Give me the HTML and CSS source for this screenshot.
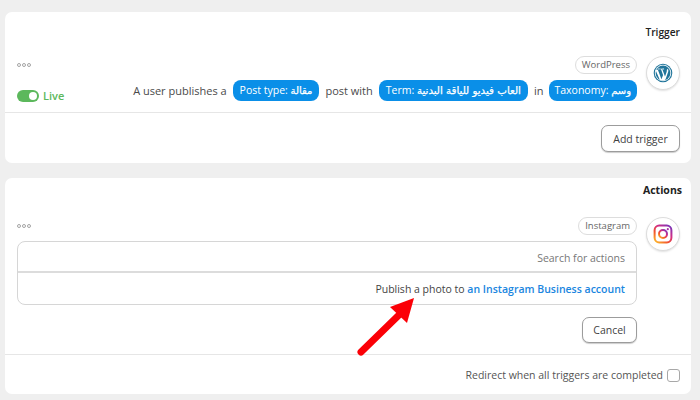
FILE: index.html
```html
<!DOCTYPE html>
<html lang="en">
<head>
<meta charset="utf-8">
<title>Automation</title>
<link rel="stylesheet" href="styles.css">
</head>
<body>
<main class="page">
  <section class="card card-trigger">
    <h2 class="card-title">Trigger</h2>
    <div class="step">
      <div class="step-main">
        <div class="step-top">
          <span class="dots"><i></i><i></i><i></i></span>
          <span class="pill">WordPress</span>
        </div>
        <div class="sentence-row">
          <span class="live"><span class="toggle"></span>Live</span>
          <div class="sentence">
            <span>A user publishes a</span>
            <span class="tag">Post type: <b>مقالة</b></span>
            <span>post with</span>
            <span class="tag">Term: <b class="wide">العاب فيديو للياقة البدنية</b></span>
            <span>in</span>
            <span class="tag tag-tight">Taxonomy: <b>وسم</b></span>
          </div>
        </div>
      </div>
      <div class="icon-circle">
        <svg width="20" height="20" viewBox="0 0 20 20" aria-hidden="true">
          <circle cx="10" cy="10" r="9.3" fill="#21759b"/>
          <circle cx="10" cy="10" r="8.2" fill="#fff"/>
          <circle cx="10" cy="10" r="7.4" fill="#21759b"/>
          <path d="M2.6 7.2 7 17.2l1.6-.4L4.8 6.4l1.6-.1h3l1.7.1-.1-.9-3 .2-2.9-.2-.2.9zM8 6.3l3.6 10.2.8.2 2.8-8c.5-1.4-.2-2.6-.6-3l-.8 1.3c0 .7.1 1.2-.2 2l-1.6 4.6-2.6-7.1zM10 17.4l2.1.1-2-5.6-2 5.4z" fill="#fff"/>
        </svg>
      </div>
    </div>
    <div class="card-footer">
      <button class="btn btn-add" type="button">Add trigger</button>
    </div>
  </section>

  <section class="card card-actions">
    <h2 class="card-title title-bold">Actions</h2>
    <div class="step step-actions">
      <div class="step-main">
        <div class="step-top top-actions">
          <span class="dots"><i></i><i></i><i></i></span>
          <span class="pill">Instagram</span>
        </div>
        <div class="picker">
          <div class="picker-search">Search for actions</div>
          <div class="picker-item">Publish a photo to <a href="#">an Instagram Business account</a></div>
        </div>
        <div class="cancel-row">
          <button class="btn btn-cancel" type="button">Cancel</button>
        </div>
      </div>
      <div class="icon-circle">
        <svg width="20" height="20" viewBox="0 0 20 20" aria-hidden="true">
          <defs>
            <linearGradient id="ig" x1="0.1" y1="1" x2="0.9" y2="0">
              <stop offset="0" stop-color="#fdb32b"/>
              <stop offset="0.35" stop-color="#f0502f"/>
              <stop offset="0.65" stop-color="#d12d86"/>
              <stop offset="1" stop-color="#7a35b8"/>
            </linearGradient>
          </defs>
          <rect x="1.6" y="1.6" width="16.8" height="16.8" rx="4.6" fill="none" stroke="url(#ig)" stroke-width="2"/>
          <circle cx="10" cy="10" r="4" fill="none" stroke="url(#ig)" stroke-width="2"/>
          <circle cx="14.8" cy="5.2" r="1.1" fill="#a832a6"/>
        </svg>
      </div>
    </div>
    <div class="card-footer footer-redirect">
      <label class="redirect">Redirect when all triggers are completed<span class="checkbox"></span></label>
    </div>
    <svg class="arrow" width="64" height="64" viewBox="0 0 64 64" aria-hidden="true">
      <path d="M7 54 46 16" stroke="#fb0007" stroke-width="7" stroke-linecap="round" fill="none"/>
      <path d="M60 0 36 9 53 25z" fill="#fb0007"/>
    </svg>
  </section>
</main>
</body>
</html>
```
FILE: styles.css
```css
* { box-sizing: border-box; }
html, body { margin: 0; padding: 0; }
body {
  background: #efefef;
  font-family: "Open Sans", "Noto Sans", "Noto Sans CJK SC", sans-serif;
  font-size: 10.5px;
  color: #4a4a4a;
  width: 700px;
  height: 400px;
  overflow: hidden;
}
.page {
  display: flex;
  flex-direction: column;
  gap: 15px;
  padding: 12px 9px 0 5px;
}
.card {
  position: relative;
  background: #fff;
  border-radius: 7px;
}
.card-trigger { height: 151px; }
.card-actions { height: 216px; }
.card-title {
  margin: 0;
  padding: 13px 11px 0 0;
  text-align: right;
  font-size: 10.2px;
  line-height: 14px;
  font-weight: 600;
  color: #222;
}
.title-bold { padding: 5px 9px 0 0; font-weight: 700; font-size: 10.5px; }
.step {
  display: flex;
  align-items: flex-start;
  gap: 9px;
  padding: 17px 11px 0 12px;
  height: 73px;
}
.step-actions { padding-top: 20px; height: 157px; }
.step-main { flex: 1; min-width: 0; }
.step-top {
  display: flex;
  justify-content: space-between;
  align-items: center;
  height: 18px;
}
.top-actions { height: 17px; }
.dots { display: flex; gap: 1px; }
.dots i {
  width: 4px;
  height: 4px;
  border: 1px solid #a5a5a5;
  border-radius: 50%;
}
.pill {
  border: 1px solid #ddd;
  border-radius: 9px;
  padding: 0 6px;
  font-size: 9.5px;
  line-height: 16px;
  color: #666;
}
.sentence-row {
  display: flex;
  justify-content: space-between;
  align-items: flex-end;
  margin-top: 6px;
  height: 21px;
}
.live {
  display: flex;
  align-items: center;
  gap: 4px;
  color: #5cb85c;
  font-weight: 600;
  font-size: 11px;
  line-height: 14px;
  margin-bottom: -2px;
}
.toggle {
  position: relative;
  width: 22px;
  height: 12px;
  border-radius: 6px;
  background: #5cb85c;
}
.toggle::after {
  content: "";
  position: absolute;
  top: 2px;
  right: 2px;
  width: 8px;
  height: 8px;
  border-radius: 50%;
  background: #fff;
}
.sentence {
  display: flex;
  align-items: center;
  gap: 6px;
  font-size: 11px;
  line-height: 21px;
  white-space: nowrap;
}
.tag {
  background: #0a8fe8;
  color: #fff;
  border-radius: 8px;
  padding: 0 7px;
  height: 21px;
  font-size: 10.5px;
}
.tag-tight { padding: 0 6px 0 5px; }
.tag b {
  font-family: "DejaVu Sans", sans-serif;
  font-weight: 400;
  font-size: 10px;
  -webkit-text-stroke: 0.25px #fff;
}
.tag b.wide { font-size: 10.25px; }
.icon-circle {
  flex: none;
  display: flex;
  align-items: center;
  justify-content: center;
  width: 34px;
  height: 34px;
  border-radius: 50%;
  background: #fff;
  border: 1px solid #ddd;
  box-shadow: 0 1px 2px rgba(0, 0, 0, 0.12);
}
.card-footer {
  display: flex;
  justify-content: flex-end;
  align-items: flex-start;
  border-top: 1px solid #e6e6e6;
  padding: 12px 11px 0 0;
}
.btn {
  background: #fff;
  border: 1px solid #9c9c9c;
  border-radius: 7px;
  font: inherit;
  color: #3f3f3f;
  box-shadow: 0 1px 1px rgba(0, 0, 0, 0.2);
  padding: 0;
}
.btn-add { width: 79px; height: 27px; }
.btn-cancel { width: 55px; height: 26px; }
.picker {
  margin-top: 7px;
  height: 64px;
  border: 1px solid #d6d6d6;
  border-radius: 8px;
  text-align: right;
}
.picker-search {
  height: 31px;
  line-height: 33px;
  padding-right: 11px;
  color: #777;
  border-bottom: 2px solid #dcdcdc;
}
.picker-item {
  line-height: 32px;
  padding-right: 11px;
  color: #444;
}
.picker-item a {
  color: #1a86e0;
  font-weight: 600;
  text-decoration: none;
}
.cancel-row {
  display: flex;
  justify-content: flex-end;
  margin-top: 12px;
}
.footer-redirect { padding-top: 13px; }
.redirect { display: flex; align-items: center; gap: 4px; line-height: 14px; color: #555; }
.checkbox {
  width: 13px;
  height: 13px;
  border: 1px solid #a8a8a8;
  border-radius: 3px;
  background: #fff;
}
.arrow {
  position: absolute;
  left: 349px;
  top: 120px;
}
```
